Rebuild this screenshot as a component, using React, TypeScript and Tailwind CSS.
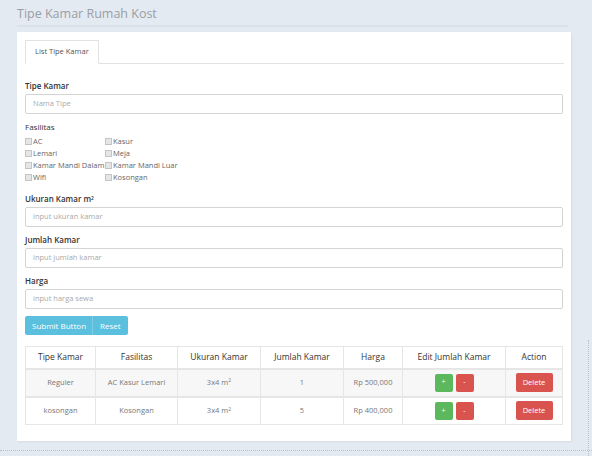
import React from 'react'

const font = { fontFamily: '"Open Sans", "Liberation Sans", sans-serif' }

const fasilitas = [
    ['AC', 'Kasur'],
    ['Lemari', 'Meja'],
    ['Kamar Mandi Dalam', 'Kamar Mandi Luar'],
    ['Wifi', 'Kosongan'],
]

const rows = [
    { tipe: 'Reguler', fas: 'AC Kasur Lemari', jumlah: '1', harga: 'Rp 500,000' },
    { tipe: 'kosongan', fas: 'Kosongan', jumlah: '5', harga: 'Rp 400,000' },
]

const Box = () => (
    <span className="inline-block h-[7px] w-[7px] border border-[#c4c4c4] bg-[#e6e6e6] mr-[1px]" />
)

const Field = ({ label, placeholder, sup }: { label: string; placeholder: string; sup?: boolean }) => (
    <div className="mb-[7px]">
        <div className="text-[8px] font-semibold text-[#333] leading-[12px] mb-[2px]">
            {label}
            {sup && <sup className="text-[5px]">2</sup>}
        </div>
        <div className="h-[20px] border border-[#d4d4d4] rounded-[2px] flex items-center px-[7px] text-[7.5px] text-[#aaa]">
            {placeholder}
        </div>
    </div>
)

const App = () => {
    return (
        <div className="w-[592px] h-[456px] bg-[#e4eaf1] overflow-hidden relative" style={font}>
            <div className="pl-[17px] pr-[24px] pt-[5px]">
                <h1 className="text-[12.5px] text-[#999ea5] leading-[18px] pb-[2px] border-b-2 border-[#dbe1e8]">
                    Tipe Kamar Rumah Kost
                </h1>
                <div className="mt-[5px] w-[554px] bg-white shadow-[1px_1px_2px_rgba(0,0,0,0.06)] pt-[8px] px-[8px] pb-[16px]">
                    <div className="flex border-b border-[#e2e2e2] mr-[-1px]">
                        <div className="h-[24px] px-[9px] flex items-center border border-[#e2e2e2] border-b-white -mb-px bg-white text-[7.5px] text-[#555]">
                            List Tipe Kamar
                        </div>
                    </div>
                    <div className="mt-[16px]">
                        <Field label="Tipe Kamar" placeholder="Nama Tipe" />
                        <div className="mb-[8px] mt-[2px]">
                            <div className="text-[8px] text-[#333] leading-[12px] mb-[2px]">Fasilitas</div>
                            <div className="grid grid-cols-[80px_1fr] text-[7.5px] text-[#666] leading-[12px]">
                                {fasilitas.flat().map((f) => (
                                    <div key={f} className="flex items-center whitespace-nowrap">
                                        <Box />
                                        {f}
                                    </div>
                                ))}
                            </div>
                        </div>
                        <div className="mt-[10px]">
                            <Field label="Ukuran Kamar m" placeholder="input ukuran kamar" sup />
                        </div>
                        <Field label="Jumlah Kamar" placeholder="input jumlah kamar" />
                        <Field label="Harga" placeholder="input harga sewa" />
                        <div className="flex mt-[7px]">
                            <button className="h-[19px] pl-[7px] pr-[6px] bg-[#5bc0de] text-white text-[8px] rounded-l-[2px] border-r border-[#7fcde5]">
                                Submit Button
                            </button>
                            <button className="h-[19px] px-[7px] bg-[#5bc0de] text-white text-[8px] rounded-r-[2px]">
                                Reset
                            </button>
                        </div>
                        <table className="mt-[11px] w-[538px] border-collapse text-center">
                            <thead>
                                <tr className="h-[22px] text-[8.5px] text-[#333]">
                                    <th className="font-normal border border-[#e6e6e6] w-[70px]">Tipe Kamar</th>
                                    <th className="font-normal border border-[#e6e6e6] w-[82px]">Fasilitas</th>
                                    <th className="font-normal border border-[#e6e6e6] w-[83px]">Ukuran Kamar</th>
                                    <th className="font-normal border border-[#e6e6e6] w-[83px]">Jumlah Kamar</th>
                                    <th className="font-normal border border-[#e6e6e6] w-[59px]">Harga</th>
                                    <th className="font-normal border border-[#e6e6e6] w-[103px]">Edit Jumlah Kamar</th>
                                    <th className="font-normal border border-[#e6e6e6]">Action</th>
                                </tr>
                            </thead>
                            <tbody>
                                {rows.map((r, i) => (
                                    <tr
                                        key={r.tipe}
                                        className={`h-[28px] text-[7.5px] text-[#777] ${i === 0 ? 'bg-[#f7f7f7]' : 'bg-white'}`}
                                    >
                                        <td className="border border-[#e6e6e6] border-t-2">{r.tipe}</td>
                                        <td className="border border-[#e6e6e6] border-t-2">{r.fas}</td>
                                        <td className="border border-[#e6e6e6] border-t-2">
                                            3x4 m<sup className="text-[5px]">2</sup>
                                        </td>
                                        <td className="border border-[#e6e6e6] border-t-2">{r.jumlah}</td>
                                        <td className="border border-[#e6e6e6] border-t-2">{r.harga}</td>
                                        <td className="border border-[#e6e6e6] border-t-2">
                                            <div className="flex justify-center gap-[3px]">
                                                <button className="w-[18px] h-[18px] rounded-[2px] bg-[#5cb85c] text-white text-[7px]">
                                                    +
                                                </button>
                                                <button className="w-[18px] h-[18px] rounded-[2px] bg-[#d9534f] text-white text-[7px]">
                                                    -
                                                </button>
                                            </div>
                                        </td>
                                        <td className="border border-[#e6e6e6] border-t-2">
                                            <button className="h-[19px] w-[37px] rounded-[2px] bg-[#d9534f] text-white text-[7.5px]">
                                                Delete
                                            </button>
                                        </td>
                                    </tr>
                                ))}
                            </tbody>
                        </table>
                    </div>
                </div>
            </div>
            <div className="absolute left-0 right-0 top-[450px] border-t border-dotted border-[#b9c2cc]" />
            <div className="absolute top-[340px] bottom-0 right-[3px] border-r border-dotted border-[#b9c2cc]" />
        </div>
    )
}

export default App
